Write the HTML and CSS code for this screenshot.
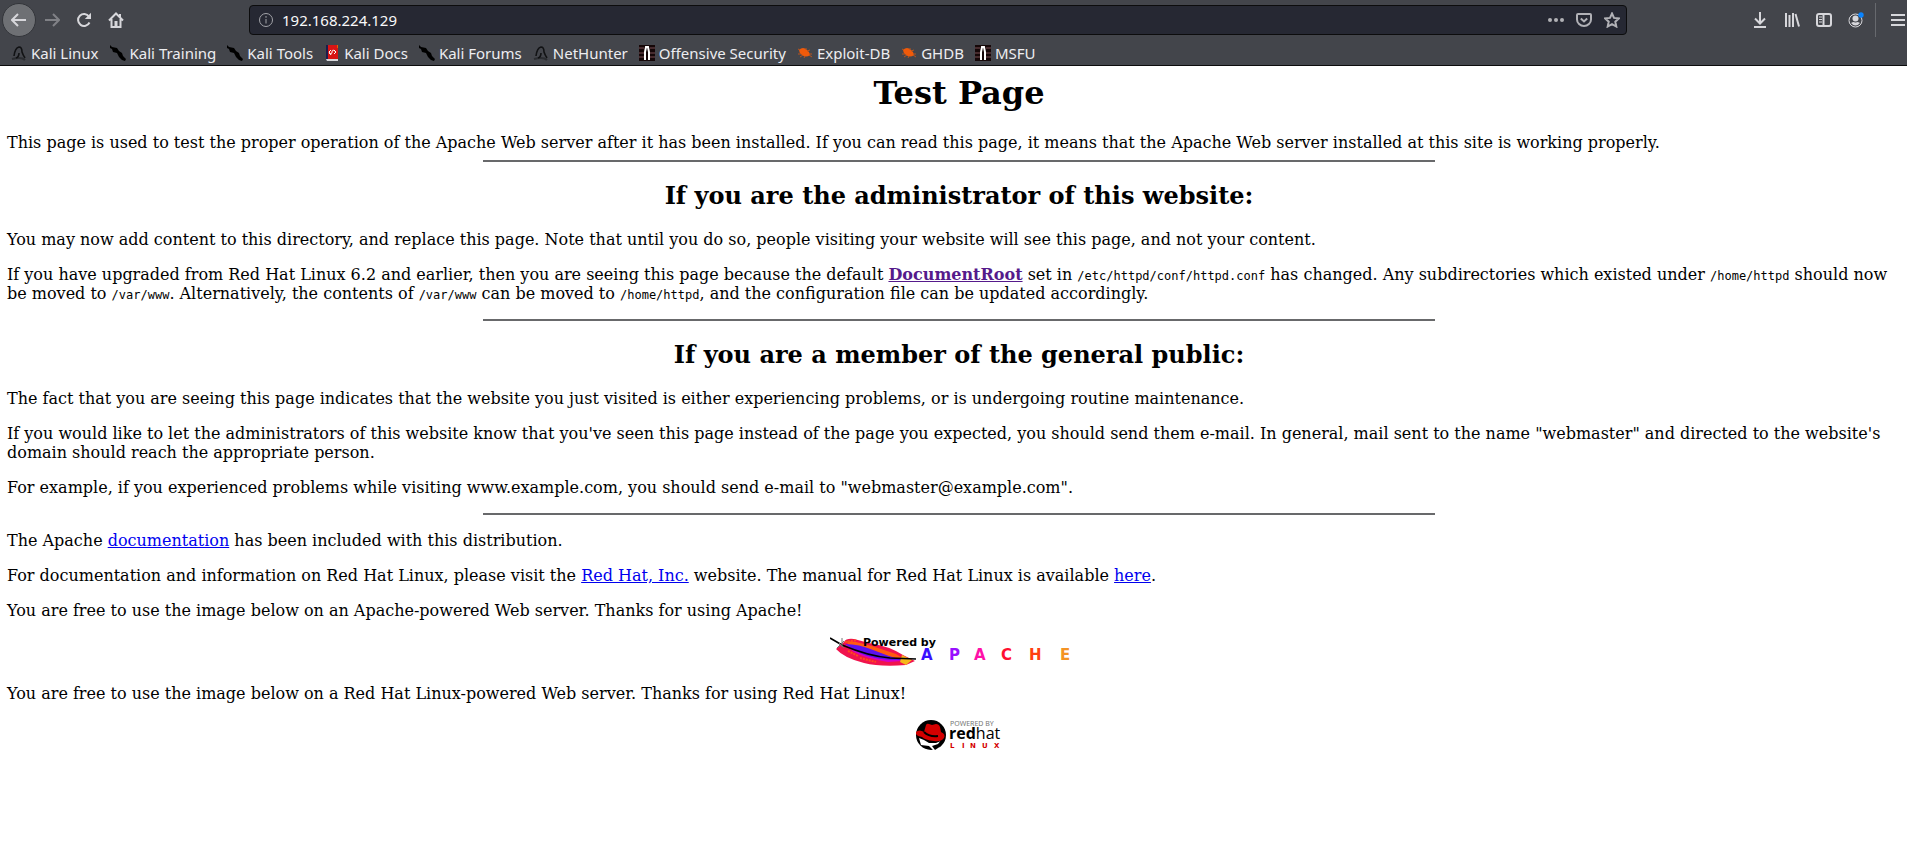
FILE: index.html
```html
<!DOCTYPE html>
<html lang="en">
<head>
<meta charset="utf-8">
<title>Test Page for the Apache Web Server on Red Hat Linux</title>
<link rel="stylesheet" href="styles.css">
</head>
<body>
<svg class="symbols" aria-hidden="true">
  <symbol id="kali" viewBox="0 0 16 16"><path d="M1 14q4-1 7-1 4 0 6 2" stroke="#2b2d31" stroke-width="2" fill="none"/><path d="M3 11q1-8 5-9 3 0 3 5 1 3 3 6M5 13q3-1 3-5" stroke="#111214" stroke-width="1.6" fill="none"/></symbol>
  <symbol id="blade" viewBox="0 0 16 16"><path d="M0 0l2 2 5 1 2 3 3 2 1 3 3 3-1 2-3-1-3-3-2-4-4-1-1-3-2-1z" fill="#000"/></symbol>
  <symbol id="docs" viewBox="0 0 16 16"><path d="M2 0h12v14H2z" fill="#d81414"/><path d="M2 0h2v14H2z" fill="#1c1c4c"/><path d="M2 14h12v2H3z" fill="#d7d7db"/><path d="M13 0h1v3h-1z" fill="#e66100"/><path d="M11 6q-3-2-3 1t-3 1M7 5l-2 2 2 3M10 5l2 2-2 2" stroke="#fff" stroke-width="1" fill="none"/></symbol>
  <symbol id="offsec" viewBox="0 0 16 16"><path d="M0 0h16v16H0z" fill="#150708"/><path d="M0 3h5M0 8h5M0 12h5M11 3h5M11 8h5M11 12h5" stroke="#58383b" stroke-width="1.5"/><path d="M6 15V7l1-5h2l1 5v8" stroke="#fff" stroke-width="2" fill="none"/></symbol>
  <symbol id="bug" viewBox="0 0 16 16"><path d="M2 5q4-4 8 0 3 2 3 5-4 3-8 0-3-2-3-5z" fill="#f05a0a"/><path d="M1 9l3 0M3 12l3-2M7 13l1-2M9 3l0 2M13 5l-3 1M15 9l-3 0M1 4l2 1M15 12l-3-2" stroke="#b9551e" stroke-width="1"/></symbol>
</svg>
<header class="browser">
  <div class="toolbar">
    <nav class="nav-buttons" aria-label="Navigation">
      <button class="tool back" aria-label="Back"><svg viewBox="0 0 16 16"><path d="M15 8H1.500M7 2L1 8l6 6"/></svg></button>
      <button class="tool forward" aria-label="Forward"><svg viewBox="0 0 16 16"><path d="M1 8h13.500M9 2l6 6-6 6"/></svg></button>
      <button class="tool" aria-label="Reload"><svg viewBox="0 0 16 16"><path d="M13.500 10.500A6 6 0 1 1 13 4.500"/><path class="solid" d="M15 .8v6.200H8.800z"/></svg></button>
      <button class="tool" aria-label="Home"><svg viewBox="0 0 16 16"><path d="M1 8.500L8 1.500l7 7M3.500 7v8h9V7"/><path class="solid" d="M6.500 9h3v6h-3zM11 2h2v4h-2z"/></svg></button>
    </nav>
    <div class="address">
      <svg class="info" viewBox="0 0 16 16" aria-hidden="true"><circle cx="8" cy="8" r="6.500"/><path d="M8 7v4.500M8 4v1.800"/></svg>
      <input class="url" type="text" value="192.168.224.129" aria-label="Address">
      <button class="page-action" aria-label="Page actions"><svg viewBox="0 0 16 16"><g class="solid"><circle cx="2" cy="8" r="2"/><circle cx="8" cy="8" r="2"/><circle cx="14" cy="8" r="2"/></g></svg></button>
      <button class="page-action" aria-label="Save to Pocket"><svg viewBox="0 0 16 16"><path d="M2 2h12q1 0 1 1v4.500a7 6.500 0 0 1-14 0V3q0-1 1-1z"/><path d="M4.800 6.500L8 9.500l3.200-3"/></svg></button>
      <button class="page-action" aria-label="Bookmark"><svg viewBox="0 0 16 16"><path d="M8 1.500l2 4.400 4.900.5-3.600 3.300 1 4.800L8 12.100l-4.300 2.400 1-4.800L1.100 6.400 6 5.900z"/></svg></button>
    </div>
    <div class="tools">
      <button class="tool" aria-label="Downloads"><svg viewBox="0 0 16 16"><path d="M8 0v11M3 6.500l5 5 5-5M2 15h12"/></svg></button>
      <button class="tool" aria-label="Library"><svg viewBox="0 0 16 16"><path d="M2 1v14M5.500 3v12M9 1v14M11.500 2l3.500 12.500"/></svg></button>
      <button class="tool" aria-label="Sidebars"><svg viewBox="0 0 16 16"><rect x="1" y="2" width="14" height="12" rx="2"/><path d="M7.500 2v12"/><path class="thin" d="M3 5h3M3 7.500h3M3 10h3"/></svg></button>
      <button class="tool" aria-label="Account"><svg viewBox="0 0 16 16"><circle class="thin" cx="7.500" cy="8.500" r="6.500"/><circle class="solid" cx="7.500" cy="6.500" r="3"/><path class="solid" d="M3 11q1.500-1 3-1 1.500 1 3 0 1.500 0 3 1-4.500 5-9 0z"/><circle cx="13" cy="3" r="2.700" fill="#0a84ff" stroke="none"/></svg></button>
      <button class="tool menu" aria-label="Menu"><svg viewBox="0 0 16 16"><path d="M1 3h14M1 8h14M1 13h14"/></svg></button>
    </div>
  </div>
  <nav class="bookmarks" aria-label="Bookmarks">
    <a href="#"><svg><use href="#kali"/></svg>Kali Linux</a>
    <a href="#"><svg><use href="#blade"/></svg>Kali Training</a>
    <a href="#"><svg><use href="#blade"/></svg>Kali Tools</a>
    <a href="#"><svg><use href="#docs"/></svg>Kali Docs</a>
    <a href="#"><svg><use href="#blade"/></svg>Kali Forums</a>
    <a href="#"><svg><use href="#kali"/></svg>NetHunter</a>
    <a href="#"><svg><use href="#offsec"/></svg>Offensive Security</a>
    <a href="#"><svg><use href="#bug"/></svg>Exploit-DB</a>
    <a href="#"><svg><use href="#bug"/></svg>GHDB</a>
    <a href="#"><svg><use href="#offsec"/></svg>MSFU</a>
  </nav>
</header>
<main class="page">
  <h1>Test Page</h1>
  <p class="intro">This page is used to test the proper operation of the Apache Web server after it has been installed. If you can read this page, it means that the Apache Web server installed at this site is working properly.</p>
  <hr>
  <h2>If you are the administrator of this website:</h2>
  <p>You may now add content to this directory, and replace this page. Note that until you do so, people visiting your website will see this page, and not your content.</p>
  <p>If you have upgraded from Red Hat Linux 6.2 and earlier, then you are seeing this page because the default <a class="visited" href="#">DocumentRoot</a> set in <code>/etc/httpd/conf/httpd.conf</code> has changed. Any subdirectories which existed under <code>/home/httpd</code> should now be moved to <code>/var/www</code>. Alternatively, the contents of <code>/var/www</code> can be moved to <code>/home/httpd</code>, and the configuration file can be updated accordingly.</p>
  <hr>
  <h2>If you are a member of the general public:</h2>
  <p>The fact that you are seeing this page indicates that the website you just visited is either experiencing problems, or is undergoing routine maintenance.</p>
  <p>If you would like to let the administrators of this website know that you've seen this page instead of the page you expected, you should send them e-mail. In general, mail sent to the name "webmaster" and directed to the website's domain should reach the appropriate person.</p>
  <p>For example, if you experienced problems while visiting www.example.com, you should send e-mail to "webmaster@example.com".</p>
  <hr>
  <p>The Apache <a href="#">documentation</a> has been included with this distribution.</p>
  <p>For documentation and information on Red Hat Linux, please visit the <a href="#">Red Hat, Inc.</a> website. The manual for Red Hat Linux is available <a href="#">here</a>.</p>
  <p>You are free to use the image below on an Apache-powered Web server. Thanks for using Apache!</p>
  <p class="badge"><svg class="apache" viewBox="0 0 259 32" role="img" aria-label="Powered by Apache">
    <path d="M14 6q2-4 10-3l15 4q20 3 34 12l12 6-9 4q-26 2-42-2-20-5-28-14z" fill="#f0134d"/>
    <path d="M17 5l9 1 16 4 24 8 8 5-22-3-20-5-14-6z" fill="#ff5a10"/>
    <path d="M15 9q18 1 30 6t27 10l-14 1q-24-4-34-10z" fill="#d400c8"/>
    <path d="M15 8q14 0 28 6t30 10l-11 0q-26-2-37-10z" fill="#5a12f0"/>
    <path d="M72 19l10 5-6 5-6-3z" fill="#f5b81a"/>
    <path d="M15 6l12-2M18 15l10 5M30 22l16 4" stroke="#ff4b1c" stroke-width="2" stroke-dasharray="2 1" fill="none"/>
    <path d="M0 2l12 7q26 11 48 13l26 1" stroke="#000" stroke-width="1.600" fill="none"/>
    <path d="M7 12l7-7M9 7l5 5M12 2v9" stroke="#777" stroke-width="1"/>
    <text class="powered" x="33" y="10">Powered by</text>
    <text class="apache-word" y="24"><tspan x="91" fill="#3a10ff">A</tspan><tspan x="119" fill="#9810ff">P</tspan><tspan x="144" fill="#ff10a8">A</tspan><tspan x="171" fill="#ff1030">C</tspan><tspan x="199" fill="#ff4010">H</tspan><tspan x="230" fill="#f49324">E</tspan></text>
  </svg></p>
  <p>You are free to use the image below on a Red Hat Linux-powered Web server. Thanks for using Red Hat Linux!</p>
  <p class="badge"><svg class="redhat" viewBox="0 0 88 31" role="img" aria-label="Powered by Red Hat Linux">
    <circle cx="16" cy="16" r="15" fill="#000"/>
    <path d="M4 19l5 2 5 3 7 0 5-2-2 9-6 0-4-4-8-1z" fill="#fff"/>
    <path d="M17 27l6-2 3-4v6l-6 4z" fill="#000"/>
    <path d="M9 13l2-7q1-2 3-1l3 1 4-1q3 0 4 3l1 5q5 2 3 6-3 4-10 3-9-1-12-4-7-1-6-5 3-3 8 0z" fill="#d40000"/>
    <path d="M9 13q5 5 14 4" stroke="#000" stroke-width="2" fill="none"/>
    <text class="small-caption" x="35" y="7">POWERED BY</text>
    <text x="34" y="20" class="red">red<tspan class="hat">hat</tspan></text>
    <text class="linux" y="29"><tspan x="35">L</tspan><tspan x="47">I</tspan><tspan x="55">N</tspan><tspan x="67">U</tspan><tspan x="79">X</tspan></text>
  </svg></p>
</main>
</body>
</html>
```
FILE: styles.css
```css
body {
  margin: 0;
  overflow: hidden;
  background: #fff;
  color: #000;
  font: 16px/19px "DejaVu Serif", serif;
}

.symbols {
  display: none;
}

.browser {
  background: #43454b;
  border-bottom: 1px solid #0c0c0d;
  color: #ededf0;
  font: 15px/20px "Noto Sans", sans-serif;
}

.toolbar {
  display: flex;
  align-items: center;
  height: 40px;
}

.nav-buttons,
.tools {
  display: flex;
  align-items: center;
}

.nav-buttons {
  flex: 0 0 249px;
}

.tool,
.page-action {
  display: flex;
  align-items: center;
  justify-content: center;
  flex: none;
  width: 32px;
  height: 34px;
  padding: 0;
  border: 0;
  background: none;
  color: #d7d7db;
}

.toolbar svg {
  width: 16px;
  height: 16px;
  fill: none;
  stroke: currentColor;
  stroke-width: 2;
}

.toolbar .solid {
  fill: currentColor;
  stroke: none;
}

.toolbar .thin {
  stroke-width: 1;
}

.tool.back {
  width: 34px;
  margin-left: 2px;
  border: 1px solid #33353a;
  border-radius: 50%;
  background: #6e7074;
}

.tool.forward {
  color: #808186;
}

.address {
  display: flex;
  align-items: center;
  flex: 1;
  gap: 4px;
  height: 30px;
  box-sizing: border-box;
  padding: 0 2px 0 8px;
  border: 1px solid #0c0c0d;
  border-radius: 4px;
  background: #262833;
}

.address .info {
  color: #a2a3a8;
  stroke-width: 1;
}

.url {
  flex: 1;
  min-width: 0;
  padding: 0 0 0 4px;
  border: 0;
  background: none;
  color: #f9f9fa;
  font: inherit;
}

.page-action {
  width: 24px;
  color: #b1b1b6;
}

.tools {
  margin-left: 117px;
  margin-right: -12px;
}

.tool.menu {
  width: 44px;
  margin-left: 3px;
  border-left: 1px solid #67696e;
}

.bookmarks {
  display: flex;
  gap: 11px;
  height: 25px;
  padding-left: 11px;
}

.bookmarks a {
  display: flex;
  align-items: center;
  gap: 4px;
  color: inherit;
  text-decoration: none;
}

.bookmarks svg {
  width: 16px;
  height: 16px;
}

.page {
  margin: 8px -4px 0 7px;
}

h1,
h2 {
  text-align: center;
}

h1 {
  margin: 0 0 21px;
  font-size: 32px;
  line-height: 38px;
}

h2 {
  margin: 20px 0;
  font-size: 24px;
  line-height: 28px;
}

p {
  margin: 16px 0;
}

.intro {
  margin-bottom: 8px;
}

hr {
  width: 50%;
  height: 2px;
  margin: 0 auto;
  border: 0;
  background: #68696b;
}

code {
  font: 12px/14px "DejaVu Sans Mono", monospace;
}

a {
  color: #0000ee;
}

.visited {
  color: #551a8b;
  font-weight: bold;
}

.badge {
  text-align: center;
}

.badge svg {
  vertical-align: bottom;
}

.apache {
  width: 259px;
  height: 32px;
}

.powered {
  font: bold 11px "DejaVu Sans", sans-serif;
}

.apache-word {
  font: bold 15px "DejaVu Sans", sans-serif;
}

.redhat {
  width: 88px;
  height: 31px;
}

.small-caption {
  fill: #777;
  font: 7px "Noto Sans", sans-serif;
}

.red {
  font: bold 16px "Open Sans", sans-serif;
}

.hat {
  font-weight: normal;
}

.linux {
  fill: #d40000;
  font: bold 7px "DejaVu Sans", sans-serif;
}
```
